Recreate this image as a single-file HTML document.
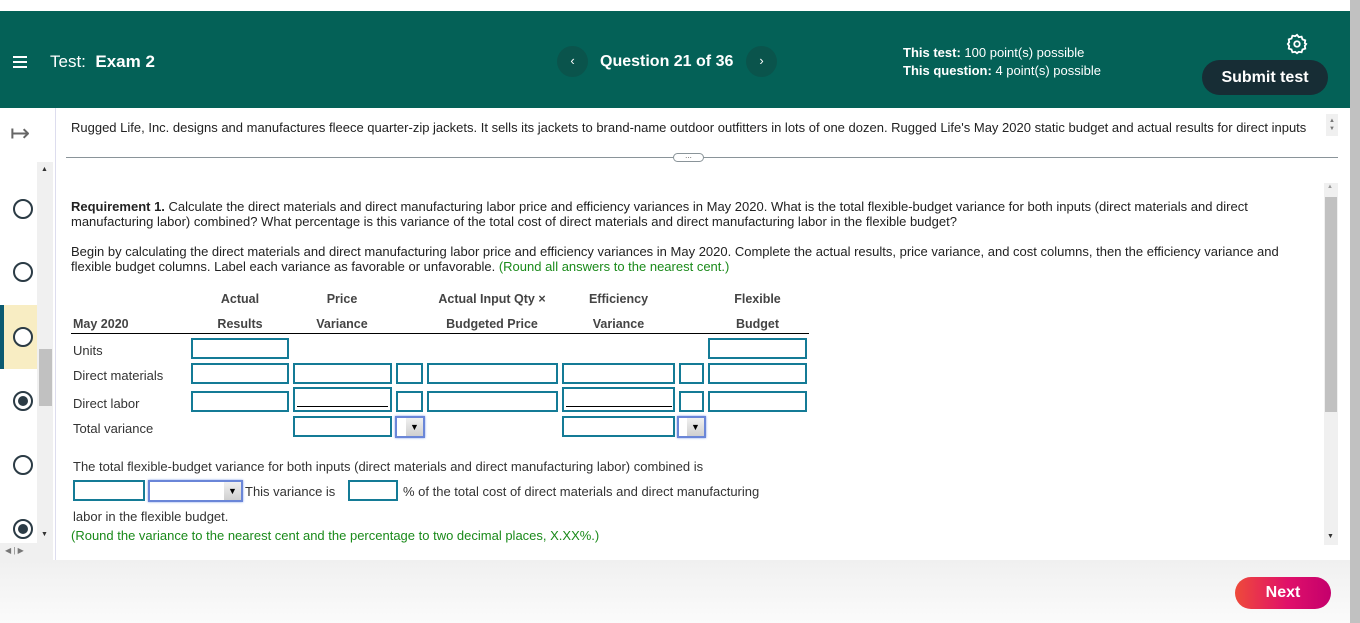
<!DOCTYPE html>
<html><head><style>
*{margin:0;padding:0;box-sizing:border-box}
body{width:1360px;height:623px;overflow:hidden;background:#fff;font-family:"Liberation Sans",Arial,sans-serif;position:relative;color:#222}
.a{position:absolute}
.hdr{left:0;top:11px;width:1350px;height:97px;background:#046157;color:#fff}
.in{position:absolute;border:2px solid #147b96;background:#fff;height:21px}
.t{font-size:13px;color:#333}
.th{font-size:12.5px;font-weight:bold;color:#444;text-align:center}
.rad{position:absolute;left:13px;width:20px;height:20px;border:2px solid #2b3b45;border-radius:50%;background:#fff}
.rad.s::after{content:"";position:absolute;left:3px;top:3px;width:10px;height:10px;border-radius:50%;background:#2b3b45}
.dd{position:absolute;border:2px solid #6a86d8;background:#fff;height:22px;box-shadow:0 0 2px #7a9ae8}
.dd i{position:absolute;right:0;top:0;width:17px;height:18px;background:linear-gradient(#f0f0f0,#cfcfcf);font-style:normal;font-size:9px;text-align:center;line-height:18px;color:#000}
</style></head><body>
<div class="a hdr">
 <div class="a" style="left:13px;top:50px;width:14px;height:2px;background:#fff;box-shadow:0 -5px 0 #fff,0 5px 0 #fff"></div>
 <div class="a" style="left:50px;top:41px;font-size:17px">Test:&nbsp; <b>Exam 2</b></div>
 <div class="a" style="left:557px;top:35px;width:31px;height:31px;border-radius:50%;background:#0a544c;text-align:center;line-height:30px;font-size:13px">‹</div>
 <div class="a" style="left:600px;top:42px;font-size:16px;font-weight:bold">Question 21 of 36</div>
 <div class="a" style="left:746px;top:35px;width:31px;height:31px;border-radius:50%;background:#0a544c;text-align:center;line-height:30px;font-size:13px">›</div>
 <div class="a" style="left:903px;top:33px;font-size:13px;line-height:18px"><b>This test:</b> 100 point(s) possible<br><b>This question:</b> 4 point(s) possible</div>
 <svg class="a" style="left:1286px;top:22px" width="22" height="22" viewBox="0 0 24 24" fill="none" stroke="#fff" stroke-width="2"><circle cx="12" cy="12" r="3"/><path d="M12 2l2 2.5 3-.5 1 3 3 1-.5 3L22 12l-1.5 2 .5 3-3 1-1 3-3-.5L12 22l-2-1.5-3 .5-1-3-3-1 .5-3L2 12l1.5-2-.5-3 3-1 1-3 3 .5z"/></svg>
 <div class="a" style="left:1202px;top:49px;width:126px;height:35px;border-radius:18px;background:#172d35;font-size:16px;font-weight:bold;text-align:center;line-height:35px">Submit test</div>
</div>
<!-- sidebar -->
<div class="a" style="left:55px;top:108px;width:1px;height:452px;background:#dde"></div>
<div class="a" style="left:10px;top:122px;font-size:24px;color:#666;line-height:24px">↦</div>
<div class="a" style="left:37px;top:162px;width:16px;height:398px;background:#f0f0f0"></div>
<div class="a" style="left:39px;top:349px;width:13px;height:57px;background:#c1c1c1"></div>
<div class="a" style="left:41px;top:166px;font-size:7px;color:#333">▲</div>
<div class="a" style="left:41px;top:531px;font-size:7px;color:#333">▼</div>
<div class="a" style="left:0;top:543px;width:37px;height:17px;background:#f0f0f0;font-size:8px;color:#777;padding:3px 0 0 5px">◀ | ▶</div>
<div class="a" style="left:0;top:305px;width:37px;height:64px;background:#f8edc3"></div>
<div class="a" style="left:0;top:305px;width:4px;height:64px;background:#0b5a71"></div>
<div class="rad" style="top:199px"></div>
<div class="rad" style="top:262px"></div>
<div class="rad" style="top:327px"></div>
<div class="rad s" style="top:391px"></div>
<div class="rad" style="top:455px"></div>
<div class="rad s" style="top:519px"></div>
<!-- intro -->
<div class="a t" style="left:71px;top:120px;color:#222;white-space:nowrap">Rugged Life, Inc. designs and manufactures fleece quarter-zip jackets. It sells its jackets to brand-name outdoor outfitters in lots of one dozen. Rugged Life's May 2020 static budget and actual results for direct inputs</div>
<div class="a" style="left:1326px;top:114px;width:12px;height:22px;background:#f0f0f0;font-size:6px;color:#777;text-align:center;line-height:8px;padding-top:3px">▲<br>▼</div>
<div class="a" style="left:66px;top:157px;width:1272px;height:1px;background:#8a9499"></div>
<div class="a" style="left:673px;top:153px;width:31px;height:9px;border:1px solid #8a9499;border-radius:5px;background:#fff;font-size:8px;line-height:4px;text-align:center;color:#555">...</div>
<div class="a" style="left:1324px;top:183px;width:14px;height:362px;background:#f0f0f0"></div>
<div class="a" style="left:1325px;top:197px;width:12px;height:215px;background:#c1c1c1"></div>
<div class="a" style="left:1327px;top:184px;font-size:6px;color:#999">▲</div>
<div class="a" style="left:1327px;top:533px;font-size:7px;color:#333">▼</div>
<div class="a" style="left:1350px;top:0;width:10px;height:623px;background:#c1c1c1"></div>
<!-- body -->
<div class="a t" style="left:71px;top:199px;width:1200px;line-height:15px;color:#222"><b>Requirement 1.</b> Calculate the direct materials and direct manufacturing labor price and efficiency variances in May 2020. What is the total flexible-budget variance for both inputs (direct materials and direct manufacturing labor) combined? What percentage is this variance of the total cost of direct materials and direct manufacturing labor in the flexible budget?</div>
<div class="a t" style="left:71px;top:244px;width:1225px;line-height:15px;color:#222">Begin by calculating the direct materials and direct manufacturing labor price and efficiency variances in May 2020. Complete the actual results, price variance, and cost columns, then the efficiency variance and flexible budget columns. Label each variance as favorable or unfavorable. <span style="color:#1a8a1a">(Round all answers to the nearest cent.)</span></div>
<div class="a th" style="left:190px;top:292px;width:100px">Actual</div>
<div class="a th" style="left:190px;top:317px;width:100px">Results</div>
<div class="a th" style="left:292px;top:292px;width:100px">Price</div>
<div class="a th" style="left:292px;top:317px;width:100px">Variance</div>
<div class="a th" style="left:427px;top:292px;width:130px">Actual Input Qty ×</div>
<div class="a th" style="left:427px;top:317px;width:130px">Budgeted Price</div>
<div class="a th" style="left:562px;top:292px;width:113px">Efficiency</div>
<div class="a th" style="left:562px;top:317px;width:113px">Variance</div>
<div class="a th" style="left:708px;top:292px;width:99px">Flexible</div>
<div class="a th" style="left:708px;top:317px;width:99px">Budget</div>
<div class="a th" style="left:73px;top:317px;text-align:left">May 2020</div>
<div class="a" style="left:71px;top:333px;width:738px;height:1px;background:#000"></div>
<div class="a t" style="left:73px;top:343px">Units</div>
<div class="a t" style="left:73px;top:368px">Direct materials</div>
<div class="a t" style="left:73px;top:396px">Direct labor</div>
<div class="a t" style="left:73px;top:421px">Total variance</div>
<div class="in" style="left:191px;top:338px;width:98px"></div>
<div class="in" style="left:708px;top:338px;width:99px"></div>
<div class="in" style="left:191px;top:363px;width:98px"></div>
<div class="in" style="left:293px;top:363px;width:99px"></div>
<div class="in" style="left:396px;top:363px;width:27px"></div>
<div class="in" style="left:427px;top:363px;width:131px"></div>
<div class="in" style="left:562px;top:363px;width:113px"></div>
<div class="in" style="left:679px;top:363px;width:25px"></div>
<div class="in" style="left:708px;top:363px;width:99px"></div>
<div class="in" style="left:191px;top:391px;width:98px"></div>
<div class="in" style="left:293px;top:387px;width:99px;height:25px"><div class="a" style="left:2px;bottom:3px;width:91px;height:1px;background:#000"></div></div>
<div class="in" style="left:396px;top:391px;width:27px"></div>
<div class="in" style="left:427px;top:391px;width:131px"></div>
<div class="in" style="left:562px;top:387px;width:113px;height:25px"><div class="a" style="left:2px;bottom:3px;width:106px;height:1px;background:#000"></div></div>
<div class="in" style="left:679px;top:391px;width:25px"></div>
<div class="in" style="left:708px;top:391px;width:99px"></div>
<div class="in" style="left:293px;top:416px;width:99px"></div>
<div class="dd" style="left:395px;top:416px;width:30px"><i>▼</i></div>
<div class="in" style="left:562px;top:416px;width:113px"></div>
<div class="dd" style="left:677px;top:416px;width:29px"><i>▼</i></div>
<div class="a t" style="left:73px;top:459px">The total flexible-budget variance for both inputs (direct materials and direct manufacturing labor) combined is</div>
<div class="in" style="left:73px;top:480px;width:72px"></div>
<div class="dd" style="left:148px;top:480px;width:95px"><i>▼</i></div>
<div class="a t" style="left:245px;top:484px">This variance is</div>
<div class="in" style="left:348px;top:480px;width:50px"></div>
<div class="a t" style="left:403px;top:484px">% of the total cost of direct materials and direct manufacturing</div>
<div class="a t" style="left:73px;top:509px">labor in the flexible budget.</div>
<div class="a t" style="left:71px;top:528px;color:#1a8a1a">(Round the variance to the nearest cent and the percentage to two decimal places, X.XX%.)</div>
<!-- footer -->
<div class="a" style="left:0;top:560px;width:1350px;height:63px;background:linear-gradient(#f0f0f0,#fbfbfb)"></div>
<div class="a" style="left:1235px;top:577px;width:96px;height:32px;border-radius:16px;background:linear-gradient(90deg,#ee4a3a,#e0106a 55%,#c4006c);color:#fff;font-weight:bold;font-size:16px;text-align:center;line-height:32px">Next</div>
</body></html>
